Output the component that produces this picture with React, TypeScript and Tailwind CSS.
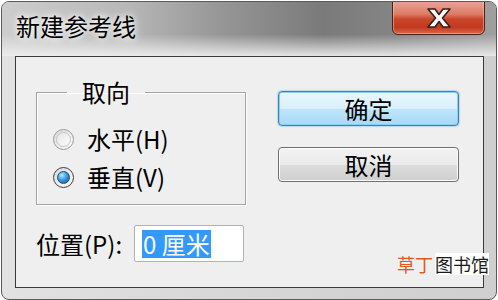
import React from "react";

const font = { fontFamily: '"Noto Sans CJK SC", "Noto Sans", sans-serif' };

function Radio({ checked }: { checked?: boolean }) {
  return (
    <span
      className={`flex h-[21px] w-[21px] items-center justify-center rounded-full border ${
        checked ? "border-[#3d3d3d]" : "border-[#9a9a9a]"
      } bg-[linear-gradient(135deg,#d8d8d8,#ffffff)]`}
    >
      {checked ? (
        <span className="h-[13px] w-[13px] rounded-full border border-[#1b4f7e] bg-[radial-gradient(circle_at_35%_30%,#bfe6ff_0%,#3d9be0_45%,#0d4f9a_100%)]" />
      ) : (
        <span className="h-[15px] w-[15px] rounded-full border border-[#c4c4c4] bg-[linear-gradient(135deg,#e6e6e6,#fbfbfb)]" />
      )}
    </span>
  );
}

function CloseGlyph() {
  return (
    <svg width="28" height="22" viewBox="0 0 28 22">
      <path
        d="M3 2 H10 L14 7.5 L18 2 H25 L17.5 11 L25 20 H18 L14 14.5 L10 20 H3 L10.5 11 Z"
        fill="#ffffff"
        stroke="#3b1d16"
        strokeWidth="1.6"
        strokeLinejoin="round"
      />
    </svg>
  );
}

export default function App() {
  return (
    <div className="h-[300px] w-[498px] overflow-hidden bg-white" style={font}>
      <div className="ml-[1px] mt-[1px] h-[299px] w-[496px] overflow-hidden rounded-[8px] border border-[#5a5a5a] bg-[linear-gradient(to_right,#e2e2e2,#d6d6d6_50%,#cfcfcf)]">
        {/* title bar */}
        <div className="relative flex h-[54px] items-start bg-[linear-gradient(to_bottom,rgba(255,255,255,0)_60%,rgba(240,240,240,0.9)_100%),linear-gradient(to_right,#cdcdcd_0%,#b8b8b8_25%,#959595_45%,#7a7a7a_65%,#858585_80%,#a0a0a0_100%)]">
          <span className="pl-[14px] pt-[8px] text-[24px] leading-[32px] text-black [text-shadow:0_0_6px_#ffffff,0_0_10px_#ffffff]">
            新建参考线
          </span>
          <div className="-mt-[2px] ml-auto mr-[11px] flex h-[35px] w-[93px] items-center justify-center rounded-b-[6px] border border-[#4a2118] bg-[linear-gradient(to_bottom,#eaa596_0%,#dc7c66_40%,#c9452a_55%,#c23a1f_80%,#d8684c_100%)] shadow-[inset_0_0_0_1px_rgba(255,200,180,0.5)]">
            <CloseGlyph />
          </div>
        </div>

        {/* client area */}
        <div className="ml-[13px] flex h-[232px] w-[469px] border border-[#3a3a3a] bg-[#efefef] text-[24px] leading-[32px] text-black">
          <div className="flex flex-col pl-[20px] pt-[19px]">
            <fieldset className="w-[210px] border border-[#a3a3a3] pb-[11px] pl-[16px] shadow-[inset_1px_1px_0_#ffffff,1px_1px_0_#ffffff]">
              <legend className="ml-[14px] px-[15px]">取向</legend>
              <div className="mt-[15px] flex h-[32px] items-center gap-[13px]">
                <Radio />
                <span>水平(H)</span>
              </div>
              <div className="mt-[6px] flex h-[32px] items-center gap-[13px]">
                <Radio checked />
                <span>垂直(V)</span>
              </div>
            </fieldset>
            <div className="mt-[20px] flex h-[37px] items-center">
              <span className="w-[98px]">位置(P):</span>
              <div className="flex h-[37px] w-[110px] items-center rounded-[2px] border border-[#abb3bf] bg-white pl-[7px]">
                <span className="bg-[#3399ff] px-[1px] leading-[28px] text-white">0 厘米</span>
              </div>
            </div>
          </div>

          <div className="ml-auto mr-[24px] mt-[34px] flex flex-col gap-[21px]">
            <button className="flex h-[35px] w-[181px] items-center justify-center rounded-[4px] border border-[#3c7fb1] bg-[linear-gradient(to_bottom,#eaf6fd_0%,#d9f0fc_50%,#bee6fd_51%,#a7d9f5_100%)] shadow-[inset_0_0_0_1px_#8ad0f5,0_0_2px_#48a6e6]">
              确定
            </button>
            <button className="flex h-[35px] w-[181px] items-center justify-center rounded-[4px] border border-[#707070] bg-[linear-gradient(to_bottom,#f2f2f2_0%,#ebebeb_50%,#dddddd_51%,#cfcfcf_100%)] shadow-[inset_0_0_0_1px_#fcfcfc]">
              取消
            </button>
          </div>
        </div>
      </div>

      {/* watermark */}
      <div className="absolute left-[397px] top-[253px] flex text-[18px] leading-[22px]">
        <span className="text-[#e2581c]">草丁</span>
        <span className="ml-[2px] bg-white text-[#1a1a1a]">图书馆</span>
      </div>
    </div>
  );
}
